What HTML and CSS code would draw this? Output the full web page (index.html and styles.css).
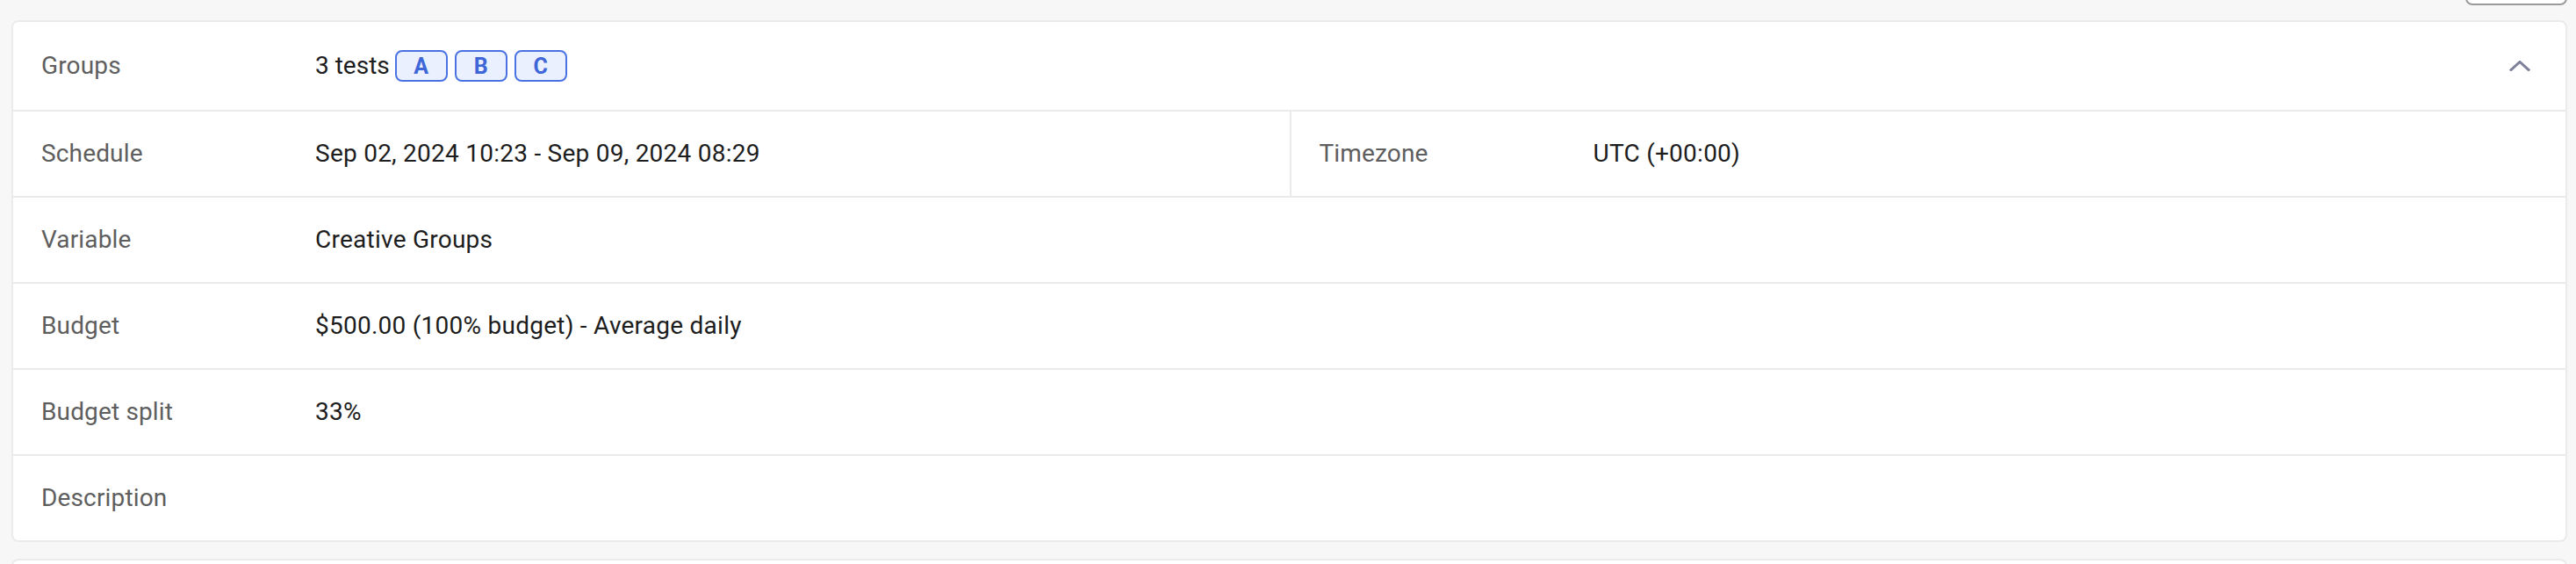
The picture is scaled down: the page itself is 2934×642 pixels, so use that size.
FILE: index.html
```html
<!DOCTYPE html>
<html lang="en">
<head>
<meta charset="utf-8">
<title>Test details</title>
<link rel="stylesheet" href="styles.css">
</head>
<body>
<div class="page">
  <div class="toolbar">
    <button class="tool-btn" type="button"></button>
  </div>

  <section class="card">
    <div class="row row-head">
      <div class="cell">
        <span class="label">Groups</span>
        <span class="value value-groups">3 tests
          <span class="badges">
            <span class="badge">A</span>
            <span class="badge">B</span>
            <span class="badge">C</span>
          </span>
        </span>
      </div>
      <span class="chevron">
        <svg viewBox="0 0 24 12" width="24" height="12" aria-hidden="true">
          <polyline points="2,10.5 12,1.5 22,10.5" fill="none" stroke="currentColor" stroke-width="3" stroke-linecap="square"/>
        </svg>
      </span>
    </div>

    <div class="row row-split">
      <div class="cell">
        <span class="label">Schedule</span>
        <span class="value">Sep 02, 2024 10:23 - Sep 09, 2024 08:29</span>
      </div>
      <div class="cell cell-right">
        <span class="label">Timezone</span>
        <span class="value">UTC (+00:00)</span>
      </div>
    </div>

    <div class="row">
      <div class="cell">
        <span class="label">Variable</span>
        <span class="value">Creative Groups</span>
      </div>
    </div>

    <div class="row">
      <div class="cell">
        <span class="label">Budget</span>
        <span class="value">$500.00 (100% budget) - Average daily</span>
      </div>
    </div>

    <div class="row">
      <div class="cell">
        <span class="label">Budget split</span>
        <span class="value">33%</span>
      </div>
    </div>

    <div class="row">
      <div class="cell">
        <span class="label">Description</span>
        <span class="value"></span>
      </div>
    </div>
  </section>

  <section class="card card-next"></section>
</div>
</body>
</html>
```

FILE: styles.css
```css
* {
  box-sizing: border-box;
}

html, body {
  margin: 0;
  padding: 0;
  background: #f7f7f7;
  font-family: Roboto, "Noto Sans", Arial, sans-serif;
  overflow: hidden;
}

.page {
  padding: 0 10px 0 13px;
  display: flex;
  flex-direction: column;
}

.toolbar {
  height: 6px;
  display: flex;
  justify-content: flex-end;
  align-items: flex-end;
  overflow: hidden;
}

.tool-btn {
  width: 116px;
  height: 40px;
  flex: none;
  background: #ffffff;
  border: 2px solid #9a9a9a;
  border-radius: 8px;
  margin-right: 0;
  padding: 0;
}

.card {
  margin-top: 17px;
  background: #ffffff;
  border: 2px solid #ebebeb;
  border-radius: 8px;
  display: flex;
  flex-direction: column;
}

.card-next {
  margin-top: 19px;
  height: 60px;
  border-bottom: none;
  border-radius: 8px 8px 0 0;
}

.row {
  display: flex;
  align-items: stretch;
  border-bottom: 2px solid #ebebeb;
}

.row:last-child {
  border-bottom: none;
}

.row-head {
  align-items: center;
}

.row-split {
  display: grid;
  grid-template-columns: 1fr 1fr;
}

.cell {
  flex: 1;
  display: flex;
  align-items: center;
  min-height: 96px;
  padding: 32px 32px;
}

.row-head .cell {
  min-height: 100px;
}

.cell-right {
  border-left: 2px solid #ebebeb;
}

.label {
  width: 312px;
  flex: none;
  font-size: 28px;
  line-height: 32px;
  letter-spacing: 0.15px;
  color: #5e5e5e;
}

.value {
  font-size: 28px;
  line-height: 32px;
  letter-spacing: 0.25px;
  color: #1d1d1d;
}

.value-groups {
  display: flex;
  align-items: center;
  letter-spacing: 0;
}

.badges {
  display: flex;
  gap: 8px;
  margin-left: 6px;
}

.badge {
  width: 60px;
  height: 36px;
  display: flex;
  align-items: center;
  justify-content: center;
  background: #eaf0fd;
  border: 2px solid #4a72e3;
  border-radius: 8px;
  color: #3e66d8;
  font-size: 25px;
  font-weight: 700;
  line-height: 1;
  letter-spacing: 0;
}

.chevron {
  flex: none;
  width: 24px;
  height: 12px;
  margin-right: 40px;
  color: #7d8199;
  display: flex;
}

.chevron svg {
  display: block;
}
```
